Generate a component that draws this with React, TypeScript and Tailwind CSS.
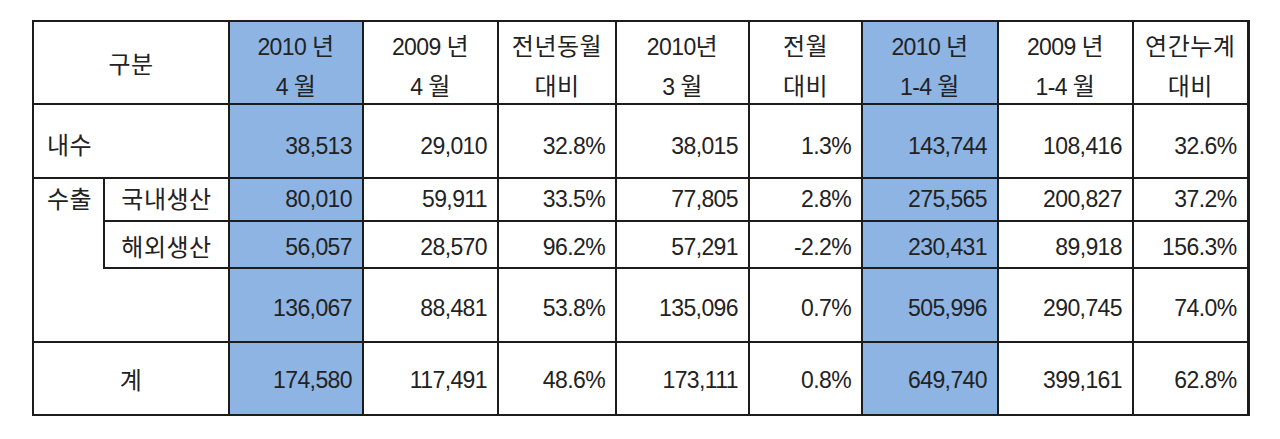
const headers = [
  ["2010 년", "4 월"],
  ["2009 년", "4 월"],
  ["전년동월", "대비"],
  ["2010년", "3 월"],
  ["전월", "대비"],
  ["2010 년", "1-4 월"],
  ["2009 년", "1-4 월"],
  ["연간누계", "대비"],
];

const widths = [71, 125, 134, 135, 118, 133, 113, 136, 135, 115];

// blue-highlighted data columns (index into the 8 data columns)
const blue = [0, 5];

const rows = {
  domestic: ["38,513", "29,010", "32.8%", "38,015", "1.3%", "143,744", "108,416", "32.6%"],
  local: ["80,010", "59,911", "33.5%", "77,805", "2.8%", "275,565", "200,827", "37.2%"],
  overseas: ["56,057", "28,570", "96.2%", "57,291", "-2.2%", "230,431", "89,918", "156.3%"],
  exportSum: ["136,067", "88,481", "53.8%", "135,096", "0.7%", "505,996", "290,745", "74.0%"],
  total: ["174,580", "117,491", "48.6%", "173,111", "0.8%", "649,740", "399,161", "62.8%"],
};

const line = "border-2 border-[#1c1c1c]";

// hangul is drawn a little larger than the digits, as in the sheet
function T({ text }: { text: string }) {
  return (
    <>
      {text.split(/([\uAC00-\uD7A3]+)/).map((part, i) =>
        /[\uAC00-\uD7A3]/.test(part) ? (
          <span key={i} className="text-[24px] tracking-[0.5px]">
            {part}
          </span>
        ) : (
          <span key={i}>{part}</span>
        )
      )}
    </>
  );
}

function DataCells({ values, pad }: { values: string[]; pad: string }) {
  return (
    <>
      {values.map((v, i) => (
        <td
          key={i}
          className={`${line} ${pad} pr-[10px] text-right ${blue.includes(i) ? "bg-[#8db4e2]" : ""} ${
            i === 7 ? "border-r-[3px]" : ""
          }`}
        >
          {v}
        </td>
      ))}
    </>
  );
}

export default function App() {
  return (
    <div className="h-[439px] w-[1280px] bg-white pl-[32px] pt-[20px]">
      <table
        className="table-fixed border-collapse text-[23px] leading-none tracking-[-0.6px] text-[#222]"
        style={{ fontFamily: '"Liberation Sans", "Noto Sans CJK KR", sans-serif' }}
      >
        <colgroup>
          {widths.map((w, i) => (
            <col key={i} style={{ width: w }} />
          ))}
        </colgroup>
        <tbody>
          <tr className="h-[83px]">
            <td colSpan={2} className={`${line} pt-[4px] text-center`}>
              <T text="구분" />
            </td>
            {headers.map(([a, b], i) => (
              <td
                key={i}
                className={`${line} text-center leading-[40px] ${blue.includes(i) ? "bg-[#8db4e2]" : ""} ${
                  i === 7 ? "border-r-[3px]" : ""
                }`}
              >
                <div className="translate-y-[4px]">
                  <div>
                    <T text={a} />
                  </div>
                  <div>
                    <T text={b} />
                  </div>
                </div>
              </td>
            ))}
          </tr>

          <tr className="h-[74px]">
            <td colSpan={2} className={`${line} pl-[13px] pt-[10px] text-left`}>
              <T text="내수" />
            </td>
            <DataCells values={rows.domestic} pad="pt-[10px]" />
          </tr>

          <tr className="h-[43px]">
            <td
              rowSpan={3}
              className="border-t-2 border-l-2 border-[#1c1c1c] pl-[13px] align-top"
            >
              <div className="flex h-[41px] items-center">
                <T text="수출" />
              </div>
            </td>
            <td className={`${line} text-center`}>
              <T text="국내생산" />
            </td>
            <DataCells values={rows.local} pad="pt-0" />
          </tr>

          <tr className="h-[47px]">
            <td className={`${line} pt-[6px] text-center`}>
              <T text="해외생산" />
            </td>
            <DataCells values={rows.overseas} pad="pt-[6px]" />
          </tr>

          <tr className="h-[74px]">
            <td className="border-t-2 border-[#1c1c1c]" />
            <DataCells values={rows.exportSum} pad="pt-[6px]" />
          </tr>

          <tr className="h-[73px]">
            <td colSpan={2} className={`${line} pt-[4px] text-center`}>
              <T text="계" />
            </td>
            <DataCells values={rows.total} pad="pt-[4px]" />
          </tr>
        </tbody>
      </table>
    </div>
  );
}
